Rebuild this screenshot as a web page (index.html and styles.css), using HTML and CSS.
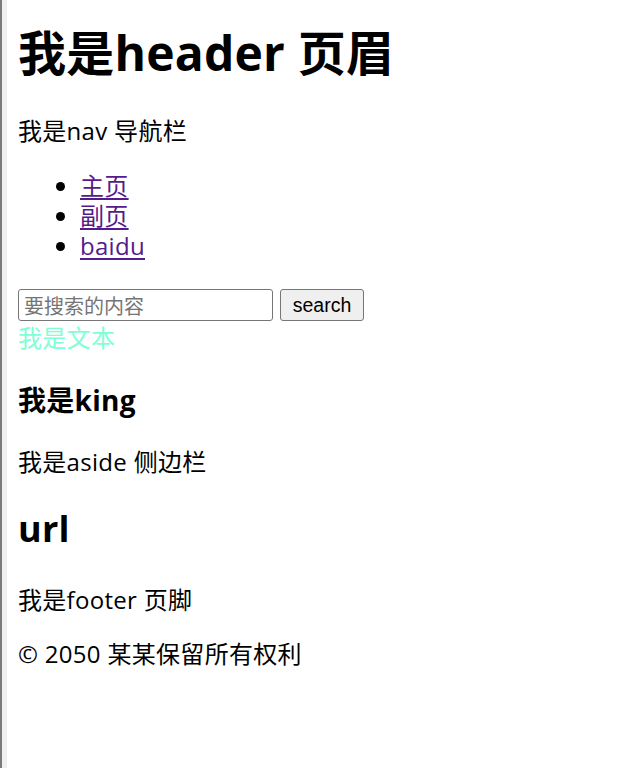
FILE: index.html
```html
<!DOCTYPE html>
<html lang="zh-CN">
<head>
<meta charset="utf-8">
<title>页面</title>
<link rel="stylesheet" href="styles.css">
</head>
<body>
<div class="page">
  <header class="site-header">
    <h1 class="title">我是header 页眉</h1>
  </header>
  <nav class="site-nav">
    <p class="text nav-label">我是nav 导航栏</p>
    <ul class="nav-list">
      <li><a class="nav-link" href="#">主页</a></li>
      <li><a class="nav-link" href="#">副页</a></li>
      <li><a class="nav-link" href="#">baidu</a></li>
    </ul>
  </nav>
  <form class="search">
    <input class="search-input" type="text" placeholder="要搜索的内容">
    <button class="search-btn" type="button">search</button>
  </form>
  <div class="green">我是文本</div>
  <section class="king">
    <h3 class="king-title">我是king</h3>
  </section>
  <aside class="side">
    <p class="text side-label">我是aside 侧边栏</p>
    <h2 class="url">url</h2>
  </aside>
  <footer class="site-footer">
    <p class="text footer-label">我是footer 页脚</p>
    <p class="text copyright">© 2050 某某保留所有权利</p>
  </footer>
</div>
</body>
</html>
```
FILE: styles.css
```css
html, body {
  margin: 0;
  padding: 0;
  height: 100%;
  background: #ffffff;
}
body {
  border-left: 2px solid #7a7a7a;
  box-sizing: border-box;
  font-family: "Open Sans", "Noto Sans CJK SC", sans-serif;
  font-size: 24px;
  line-height: 30px;
  letter-spacing: 0.3px;
  color: #000;
}
.page {
  min-height: 100%;
  box-sizing: border-box;
  border-left: 5px solid #efefef;
  padding: 27px 0 0 11px;
  display: flow-root;
}
.title {
  margin: 0;
  font-size: 48px;
  line-height: 52px;
  font-weight: 700;
  letter-spacing: 0.2px;
}
.text {
  margin: 0;
}
.nav-label {
  margin-top: 37px;
}
.nav-list {
  margin: 25px 0 0;
  padding-left: 62px;
  list-style: disc;
}
.nav-link {
  color: #551a8b;
  text-decoration: underline;
  text-underline-offset: 3px;
  text-decoration-thickness: 1.5px;
}
.search {
  margin: 28px 0 0;
  display: flex;
  align-items: center;
  gap: 7px;
}
.search-input {
  box-sizing: border-box;
  width: 255px;
  height: 32px;
  margin: 0;
  padding: 0 5px;
  border: 1px solid #767676;
  border-radius: 3px;
  font-family: "Noto Sans CJK SC", sans-serif;
  font-size: 20px;
  letter-spacing: 0;
  color: #000;
  background: #fff;
}
.search-input::placeholder {
  color: #757575;
}
.search-btn {
  box-sizing: border-box;
  width: 84px;
  height: 32px;
  margin: 0;
  padding: 0;
  border: 1px solid #767676;
  border-radius: 3px;
  background: #efefef;
  font-family: "Liberation Sans", Arial, sans-serif;
  font-size: 19.5px;
  letter-spacing: 0;
  color: #000;
}
.green {
  margin-top: 2px;
  color: #7fffd4;
}
.king-title {
  margin: 29px 0 0;
  font-size: 28px;
  line-height: 36px;
  font-weight: 700;
}
.side-label {
  margin-top: 29px;
}
.url {
  margin: 29px 0 0;
  font-size: 36px;
  line-height: 46px;
  font-weight: 700;
}
.footer-label {
  margin-top: 33px;
}
.copyright {
  margin-top: 24px;
}
```
